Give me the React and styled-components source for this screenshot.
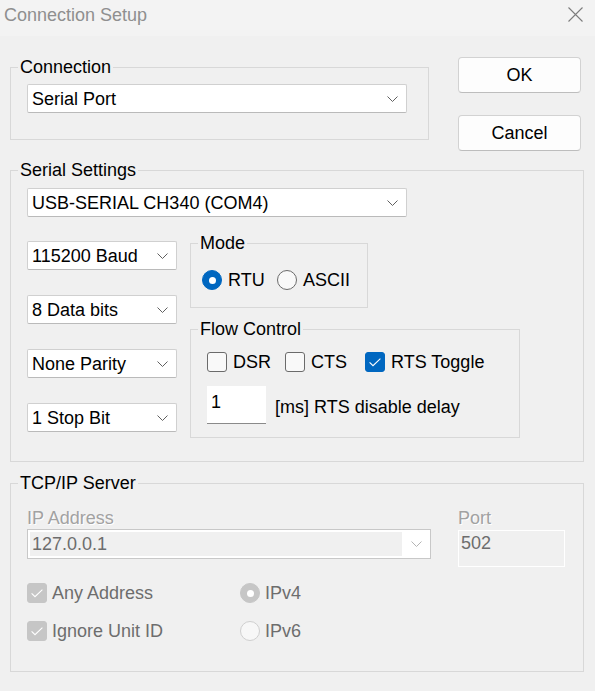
import React from 'react'
import styled, {createGlobalStyle} from 'styled-components'

const GlobalStyle = createGlobalStyle`
  html, body {
    margin: 0;
    padding: 0;
    background: #f0f0f0;
  }
  body {
    font-family: "Liberation Sans", Arial, sans-serif;
    font-size: 18px;
    line-height: 20px;
    color: #000;
  }
  * {
    box-sizing: border-box;
  }
`

function Chevron({color = '#606060'}) {
  return (
    <svg width="11" height="6" viewBox="0 0 11 6">
      <path d="M0.5 0.5 L5.5 5.5 L10.5 0.5" fill="none" stroke={color} strokeWidth="1" />
    </svg>
  )
}

function Check() {
  return (
    <svg width="12" height="9" viewBox="0 0 12 9">
      <path d="M0.6 4.3 L4 7.7 L11.4 0.6" fill="none" stroke="#fff" strokeWidth="1.1" />
    </svg>
  )
}

function Dropdown({value, width}) {
  return (
    <Select $w={width}>
      <span>{value}</span>
      <Chevron />
    </Select>
  )
}

function Radio({label, checked, disabled, width}) {
  return (
    <Option $w={width} $disabled={disabled}>
      <RadioDot $checked={checked} $disabled={disabled} />
      {label}
    </Option>
  )
}

function CheckBox({label, checked, disabled, width}) {
  return (
    <Option $w={width} $disabled={disabled}>
      <Box $checked={checked} $disabled={disabled}>
        {checked && <Check />}
      </Box>
      {label}
    </Option>
  )
}

export default function App() {
  return (
    <Window>
      <GlobalStyle />
      <TitleBar>
        <Title>Connection Setup</Title>
        <svg width="15" height="15" viewBox="0 0 15 15" style={{marginTop: 2}}>
          <path d="M0.5 0.5 L14.5 14.5 M14.5 0.5 L0.5 14.5" stroke="#7c7c7c" strokeWidth="1.1" />
        </svg>
      </TitleBar>

      <Body>
        <TopRow>
          <Group $w={419}>
            <Legend>Connection</Legend>
            <GroupBody $pad="7px 0 26px 16px">
              <Dropdown value="Serial Port" width={380} />
            </GroupBody>
          </Group>
          <ButtonColumn>
            <Button>OK</Button>
            <Button>Cancel</Button>
          </ButtonColumn>
        </TopRow>

        <Group $w={574} $mt={9}>
          <Legend>Serial Settings</Legend>
          <GroupBody $pad="8px 0 23px 16px">
            <Dropdown value="USB-SERIAL CH340 (COM4)" width={380} />
            <SerialRow>
              <ComboColumn>
                <Dropdown value="115200 Baud" width={150} />
                <Dropdown value="8 Data bits" width={150} />
                <Dropdown value="None Parity" width={150} />
                <Dropdown value="1 Stop Bit" width={150} />
              </ComboColumn>
              <SubColumn>
                <Group $w={178}>
                  <Legend>Mode</Legend>
                  <GroupBody $pad="17px 0 17px 11px">
                    <OptionRow>
                      <Radio label="RTU" checked width={75} />
                      <Radio label="ASCII" />
                    </OptionRow>
                  </GroupBody>
                </Group>
                <Group $w={330}>
                  <Legend>Flow Control</Legend>
                  <GroupBody $pad="13px 0 13px 16px">
                    <OptionRow>
                      <CheckBox label="DSR" width={78} />
                      <CheckBox label="CTS" width={80} />
                      <CheckBox label="RTS Toggle" checked />
                    </OptionRow>
                    <DelayRow>
                      <EditBox>1</EditBox>
                      <DelayLabel>[ms] RTS disable delay</DelayLabel>
                    </DelayRow>
                  </GroupBody>
                </Group>
              </SubColumn>
            </SerialRow>
          </GroupBody>
        </Group>

        <Group $w={574} $mt={11}>
          <Legend>TCP/IP Server</Legend>
          <GroupBody $pad="15px 0 30px 16px">
            <AddressGrid>
              <FieldLabel>IP Address</FieldLabel>
              <FieldLabel>Port</FieldLabel>
              <DisabledCombo>
                <ComboText>127.0.0.1</ComboText>
                <ComboArrow>
                  <Chevron color="#b4b4b4" />
                </ComboArrow>
              </DisabledCombo>
              <PortEdit>502</PortEdit>
            </AddressGrid>
            <OptionsGrid>
              <CheckBox label="Any Address" checked disabled />
              <Radio label="IPv4" checked disabled />
              <CheckBox label="Ignore Unit ID" checked disabled />
              <Radio label="IPv6" disabled />
            </OptionsGrid>
          </GroupBody>
        </Group>
      </Body>
    </Window>
  )
}

const Window = styled.div`
  width: 595px;
  height: 691px;
  overflow: hidden;
  background: #f0f0f0;
`

const TitleBar = styled.div`
  height: 36px;
  background: #f3f3f3;
  display: flex;
  justify-content: space-between;
  align-items: flex-start;
  padding: 5px 12px 0 4px;
`

const Title = styled.div`
  color: #8f8f8f;
`

const Body = styled.div`
  padding: 21px 0 0 10px;
`

const TopRow = styled.div`
  display: flex;
  align-items: flex-start;
  gap: 29px;
`

const ButtonColumn = styled.div`
  display: flex;
  flex-direction: column;
  gap: 22px;
`

const Button = styled.button`
  width: 123px;
  height: 36px;
  background: #fdfdfd;
  border: 1px solid #d2d2d2;
  border-bottom-color: #bdbdbd;
  border-radius: 4px;
  font: inherit;
  color: #000;
  padding: 0;
`

const Group = styled.fieldset`
  margin: ${p => p.$mt || 0}px 0 0 0;
  padding: 0;
  min-width: 0;
  width: ${p => p.$w}px;
  border: 1px solid #d8d8d8;
`

const Legend = styled.legend`
  margin-left: 7px;
  padding: 0 2px;
  line-height: 20px;
`

const GroupBody = styled.div`
  padding: ${p => p.$pad};
`

const Select = styled.div`
  width: ${p => p.$w}px;
  height: 29px;
  display: flex;
  align-items: center;
  justify-content: space-between;
  padding: 1px 8px 0 4px;
  background: #fff;
  border: 1px solid #d0d0d0;
  border-bottom-color: #bababa;
  border-radius: 2px;
  white-space: nowrap;
`

const SerialRow = styled.div`
  display: flex;
  gap: 13px;
  margin-top: 16px;
`

const ComboColumn = styled.div`
  display: flex;
  flex-direction: column;
  gap: 25px;
  padding-top: 8px;
`

const SubColumn = styled.div`
  display: flex;
  flex-direction: column;
  gap: 11px;
`

const OptionRow = styled.div`
  display: flex;
  align-items: center;
  height: 20px;
`

const Option = styled.label`
  display: inline-flex;
  align-items: center;
  gap: ${p => (p.$disabled ? 5 : 6)}px;
  width: ${p => (p.$w ? `${p.$w}px` : 'auto')};
  color: ${p => (p.$disabled ? '#6d6d6d' : '#000')};
  white-space: nowrap;
`

const RadioDot = styled.span`
  flex: none;
  width: 20px;
  height: 20px;
  border-radius: 50%;
  display: flex;
  align-items: center;
  justify-content: center;
  background: ${p =>
    p.$checked ? (p.$disabled ? '#c6c6c6' : '#0067c0') : p.$disabled ? '#f7f7f7' : '#f9f9f9'};
  border: 1px solid
    ${p =>
      p.$checked ? (p.$disabled ? '#c6c6c6' : '#0067c0') : p.$disabled ? '#cfcfcf' : '#6b6b6b'};

  &::after {
    content: '';
    display: ${p => (p.$checked ? 'block' : 'none')};
    width: 7px;
    height: 7px;
    border-radius: 50%;
    background: #fff;
  }
`

const Box = styled.span`
  flex: none;
  width: 20px;
  height: 20px;
  border-radius: 3px;
  display: flex;
  align-items: center;
  justify-content: center;
  background: ${p =>
    p.$checked ? (p.$disabled ? '#c6c6c6' : '#0067c0') : '#f9f9f9'};
  border: 1px solid
    ${p => (p.$checked ? (p.$disabled ? '#c6c6c6' : '#0067c0') : '#6b6b6b')};
`

const DelayRow = styled.div`
  display: flex;
  align-items: center;
  gap: 9px;
  margin-top: 14px;
`

const EditBox = styled.div`
  width: 59px;
  height: 38px;
  background: #fff;
  border-bottom: 1px solid #8a8a8a;
  padding: 6px 0 0 4px;
`

const DelayLabel = styled.span`
  padding-top: 3px;
`

const AddressGrid = styled.div`
  display: grid;
  grid-template-columns: 404px 107px;
  column-gap: 27px;
  row-gap: 1px;
  align-items: start;
`

const FieldLabel = styled.div`
  color: #a2a2a2;
  text-shadow: 1px 1px 0 #fff;
`

const DisabledCombo = styled.div`
  height: 30px;
  display: flex;
  padding: 2px 0 2px 2px;
  background: #fff;
  border: 1px solid #c8c8c8;
`

const ComboText = styled.div`
  flex: 1;
  display: flex;
  align-items: center;
  padding-left: 2px;
  background: #f0f0f0;
  color: #6d6d6d;
`

const ComboArrow = styled.div`
  width: 28px;
  display: flex;
  align-items: center;
  justify-content: center;
`

const PortEdit = styled.div`
  height: 37px;
  margin-top: 1px;
  padding: 2px;
  background: #f0f0f0;
  border: 1px solid #fff;
  color: #6d6d6d;
`

const OptionsGrid = styled.div`
  display: grid;
  grid-template-columns: 213px auto;
  row-gap: 18px;
  margin-top: 16px;

  & > label {
    height: 20px;
  }
`
